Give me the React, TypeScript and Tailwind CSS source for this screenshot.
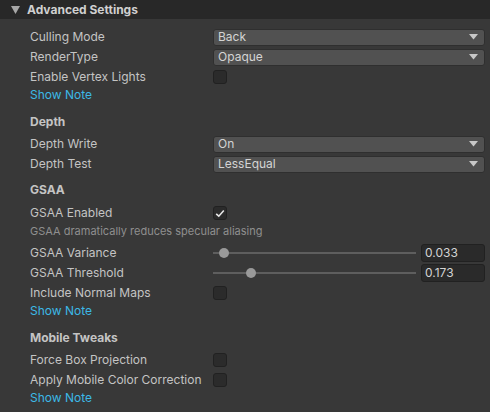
import React from "react"

const font = { fontFamily: "Inter, 'Noto Sans', sans-serif" }

function Dropdown({ value }: { value: string }) {
  return (
    <div className="flex h-[17px] flex-1 items-center justify-between rounded-[3px] border border-[#2f2f2f] bg-[#515151] pl-[4px] pr-[6px] text-[12px] text-[#d4d4d4]">
      <span>{value}</span>
      <svg width="9" height="6" viewBox="0 0 9 6">
        <path d="M0 0 H9 L4.5 5.5 Z" fill="#c8c8c8" />
      </svg>
    </div>
  )
}

function Checkbox({ checked }: { checked?: boolean }) {
  return (
    <div className="flex h-[14px] w-[14px] items-center justify-center rounded-[3px] border border-[#212121] bg-[#2b2b2b]">
      {checked && (
        <svg width="10" height="9" viewBox="0 0 10 9">
          <path d="M1.2 4.8 L3.8 7.2 L8.8 1.4" stroke="#e6e6e6" strokeWidth="1.6" fill="none" />
        </svg>
      )}
    </div>
  )
}

function Slider({ value }: { value: number }) {
  return (
    <div className="flex flex-1 items-center gap-[5px]">
      <div className="relative h-[18px] flex-1">
        <div className="absolute left-0 right-0 top-[8px] h-[2px] bg-[#5e5e5e]" />
        <div
          className="absolute top-[4px] h-[10px] w-[10px] rounded-full bg-[#999999]"
          style={{ left: `calc((100% - 10px) * ${value})` }}
        />
      </div>
      <div className="flex h-[18px] w-[64px] items-center rounded-[3px] border border-[#212121] bg-[#2a2a2a] px-[3px] text-[12px] text-[#d4d4d4]">
        {value.toFixed(3)}
      </div>
    </div>
  )
}

function Row({ label, children }: { label: string; children?: React.ReactNode }) {
  return (
    <div className="flex h-[20px] items-center">
      <div className="w-[183px] shrink-0 text-[12px] text-[#c4c4c4]">{label}</div>
      <div className="flex flex-1 items-center">{children}</div>
    </div>
  )
}

function Note() {
  return <div className="flex h-[16px] items-center text-[12px] text-[#3cb8e6]">Show Note</div>
}

function Section({ title, mt }: { title: string; mt: string }) {
  return (
    <div className={`flex h-[20px] items-center text-[12px] font-bold text-[#c4c4c4] ${mt}`}>{title}</div>
  )
}

export default function App() {
  return (
    <div className="h-[412px] w-[490px] overflow-hidden bg-[#383838]" style={font}>
      <div className="flex h-[19px] items-center gap-[7px] bg-[#282828] pl-[11px]">
        <svg width="9" height="8" viewBox="0 0 9 8">
          <path d="M0 0 H9 L4.5 8 Z" fill="#a8a8a8" />
        </svg>
        <span className="text-[12px] font-bold text-[#d0d0d0]">Advanced Settings</span>
      </div>

      <div className="flex flex-col pl-[30px] pr-[5px] pt-[8px]">
        <Row label="Culling Mode">
          <Dropdown value="Back" />
        </Row>
        <Row label="RenderType">
          <Dropdown value="Opaque" />
        </Row>
        <Row label="Enable Vertex Lights">
          <Checkbox />
        </Row>
        <Note />

        <Section title="Depth" mt="mt-[9px] mb-[2px]" />
        <Row label="Depth Write">
          <Dropdown value="On" />
        </Row>
        <Row label="Depth Test">
          <Dropdown value="LessEqual" />
        </Row>

        <Section title="GSAA" mt="mt-[6px] mb-[3px]" />
        <Row label="GSAA Enabled">
          <Checkbox checked />
        </Row>
        <div className="mb-[4px] flex h-[16px] items-center text-[11px] text-[#8f8f8f]">
          GSAA dramatically reduces specular aliasing
        </div>
        <Row label="GSAA Variance">
          <Slider value={0.033} />
        </Row>
        <Row label="GSAA Threshold">
          <Slider value={0.173} />
        </Row>
        <Row label="Include Normal Maps">
          <Checkbox />
        </Row>
        <Note />

        <Section title="Mobile Tweaks" mt="mt-[9px] mb-[2px]" />
        <Row label="Force Box Projection">
          <Checkbox />
        </Row>
        <Row label="Apply Mobile Color Correction">
          <Checkbox />
        </Row>
        <Note />
      </div>
    </div>
  )
}
